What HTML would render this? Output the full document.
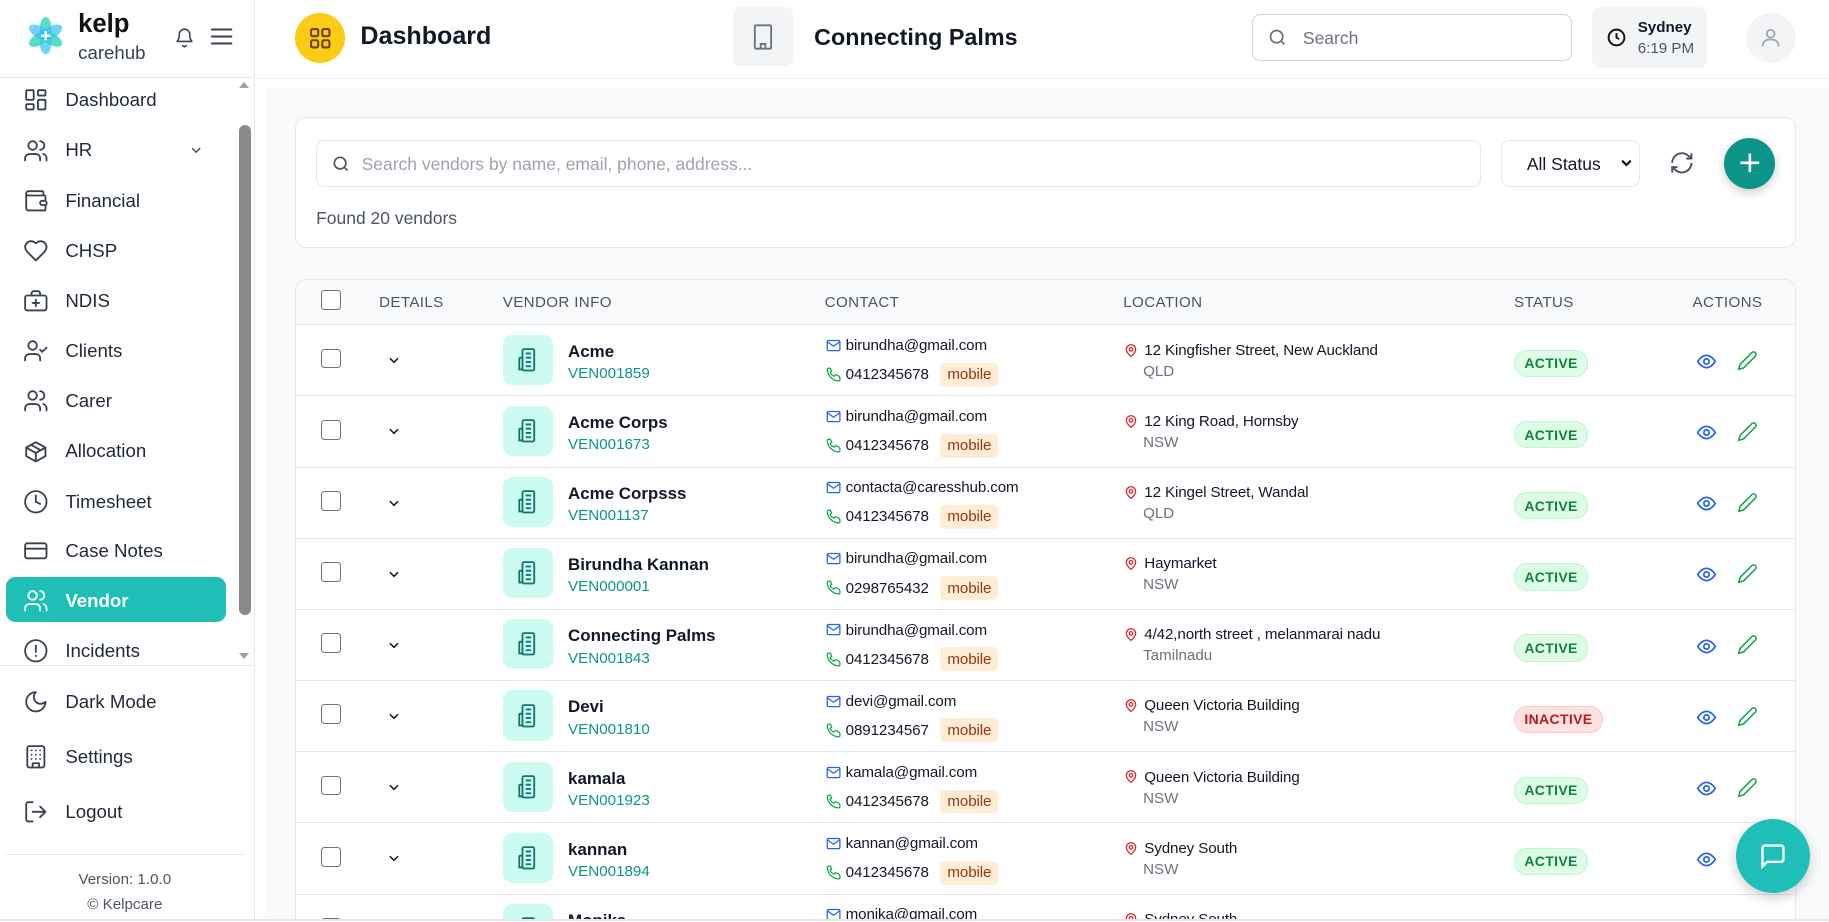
<!DOCTYPE html>
<html><head><meta charset="utf-8"><style>
*{box-sizing:border-box;margin:0;padding:0}
html,body{width:1829px;height:922px;overflow:hidden;background:#fff}
#w{zoom:1.16645;width:1568px;height:790px;position:relative;font-family:"Liberation Sans",sans-serif;color:#111827;overflow:hidden}
.abs{position:absolute}
svg{display:block}
.side{left:0;top:0;width:219px;height:790px;border-right:1px solid #e5e7eb;background:#fff}
.nav{position:absolute;left:20px;font-size:16px;color:#1f2937;display:flex;align-items:center;gap:14px;height:24px}
.nav svg{width:22px;height:22px;stroke:#374151;fill:none;stroke-width:1.7;stroke-linecap:round;stroke-linejoin:round}
.main{left:227px;top:75px;width:1341px;height:715px;background:#f9fafb}
.card{background:#fff;border:1px solid #e5e7eb;border-radius:10px}
.th{position:absolute;top:252px;font-size:13px;color:#4b5563;letter-spacing:.3px}
.cb{position:absolute;width:17px;height:17px;border:1.5px solid #6b7280;border-radius:3px;background:#fff}
.row{position:absolute;left:254px;width:1285px;height:61px;border-top:1px solid #e5e7eb}
.ib{position:absolute;left:177px;top:8px;width:43px;height:43px;background:#ccfbf1;border-radius:8px;display:flex;align-items:center;justify-content:center}
.nm{position:absolute;left:233px;top:14px;font-size:14.5px;font-weight:bold;color:#111827}
.id{position:absolute;left:233px;top:34px;font-size:13px;color:#0d9488}
.em{position:absolute;left:454px;top:10px;font-size:13px;display:flex;align-items:center;gap:4px;letter-spacing:-.1px}
.ph{position:absolute;left:454px;top:32px;font-size:13px;display:flex;align-items:center;gap:4px;letter-spacing:-.1px}
.mob{background:#ffedd5;color:#9a3412;border-radius:4px;padding:3px 6px;font-size:13px;margin-left:6px}
.l1{position:absolute;left:710px;top:14px;font-size:13px;display:flex;align-items:center;gap:5px;letter-spacing:-.1px}
.l2{position:absolute;left:726px;top:32px;font-size:13px;color:#6b7280}
.st{position:absolute;left:1044px;top:21px;font-size:12px;font-weight:bold;border-radius:11px;padding:4px 8px;letter-spacing:.3px}
.ac{background:#dcfce7;border:1px solid #bbf7d0;color:#15803d}
.in{background:#fee2e2;border:1px solid #fecaca;color:#b91c1c}
.eye{position:absolute;left:1200px;top:22px}
.pen{position:absolute;left:1235px;top:21px}
.chev{position:absolute;left:78px;top:24px}
</style></head><body><div id="w">

<div class="abs side">
 <svg class="abs" style="left:23px;top:15px" width="32" height="32" viewBox="0 0 32 32">
  <g transform="translate(16 16)">
   <ellipse rx="5" ry="10" cy="-6" fill="#2dd4bf" opacity=".8"/>
   <ellipse rx="5" ry="10" cy="-6" fill="#38bdf8" opacity=".7" transform="rotate(60)"/>
   <ellipse rx="5" ry="10" cy="-6" fill="#2dd4bf" opacity=".8" transform="rotate(120)"/>
   <ellipse rx="5" ry="10" cy="-6" fill="#38bdf8" opacity=".7" transform="rotate(180)"/>
   <ellipse rx="5" ry="10" cy="-6" fill="#2dd4bf" opacity=".8" transform="rotate(240)"/>
   <ellipse rx="5" ry="10" cy="-6" fill="#38bdf8" opacity=".7" transform="rotate(300)"/>
   <path d="M0-4V4M-4 0H4" stroke="#fff" stroke-width="2"/>
  </g></svg>
 <div class="abs" style="left:67px;top:9px;font-size:22px;font-weight:bold;color:#111">kelp</div>
 <div class="abs" style="left:67px;top:36px;font-size:16px;color:#374151">carehub</div>
 <svg class="abs" style="left:149px;top:22px" width="18" height="19" viewBox="0 0 24 24" fill="none" stroke="#374151" stroke-width="1.8"><path d="M6 9a6 6 0 0112 0c0 7 3 8 3 8H3s3-1 3-8M10 21a2 2 0 004 0"/></svg>
 <svg class="abs" style="left:180px;top:22px" width="20" height="18" viewBox="0 0 20 18" stroke="#374151" stroke-width="1.8"><path d="M1 3h18M1 9h18M1 15h18"/></svg>
 <div class="abs" style="left:0;top:66px;width:219px;border-top:1px solid #e5e7eb"></div>

 <div class="nav" style="top:74px"><svg viewBox="0 0 24 24"><rect x="3" y="3" width="7" height="9" rx="1"/><rect x="14" y="3" width="7" height="5" rx="1"/><rect x="14" y="12" width="7" height="9" rx="1"/><rect x="3" y="16" width="7" height="5" rx="1"/></svg>Dashboard</div>
 <div class="nav" style="top:117px"><svg viewBox="0 0 24 24"><circle cx="9" cy="7" r="4"/><path d="M2 21v-2a4 4 0 014-4h6a4 4 0 014 4v2M16 3a4 4 0 010 8M22 21v-2a4 4 0 00-3-4"/></svg>HR</div>
 <svg class="abs" style="left:161px;top:122px" width="14" height="14" viewBox="0 0 24 24" fill="none" stroke="#374151" stroke-width="2"><path d="M6 9l6 6 6-6"/></svg>
 <div class="nav" style="top:160px"><svg viewBox="0 0 24 24"><path d="M19 7V4a1 1 0 00-1-1H5a2 2 0 000 4h15a1 1 0 011 1v4h-3a2 2 0 000 4h3a1 1 0 001-1v-2M3 5v14a2 2 0 002 2h15a1 1 0 001-1v-4"/></svg>Financial</div>
 <div class="nav" style="top:203px"><svg viewBox="0 0 24 24"><path d="M19 14c1.5-1.5 3-3.2 3-5.5A5.5 5.5 0 0016.5 3c-1.8 0-3 .5-4.5 2-1.5-1.5-2.7-2-4.5-2A5.5 5.5 0 002 8.5c0 2.3 1.5 4 3 5.5l7 7z"/></svg>CHSP</div>
 <div class="nav" style="top:246px"><svg viewBox="0 0 24 24"><rect x="2" y="7" width="20" height="14" rx="2"/><path d="M8 7V5a2 2 0 012-2h4a2 2 0 012 2v2M12 11v6M9 14h6"/></svg>NDIS</div>
 <div class="nav" style="top:289px"><svg viewBox="0 0 24 24"><circle cx="9" cy="7" r="4"/><path d="M2 21v-2a4 4 0 014-4h6a4 4 0 014 4v2M16 11l2 2 4-4"/></svg>Clients</div>
 <div class="nav" style="top:332px"><svg viewBox="0 0 24 24"><circle cx="9" cy="7" r="4"/><path d="M2 21v-2a4 4 0 014-4h6a4 4 0 014 4v2M16 3a4 4 0 010 8M22 21v-2a4 4 0 00-3-4"/></svg>Carer</div>
 <div class="nav" style="top:375px"><svg viewBox="0 0 24 24"><path d="M21 8l-9-5-9 5v8l9 5 9-5zM3 8l9 5 9-5M12 13v8M7.5 5.5l9 5"/></svg>Allocation</div>
 <div class="nav" style="top:418px"><svg viewBox="0 0 24 24"><circle cx="12" cy="12" r="10"/><path d="M12 6v6l4 2"/></svg>Timesheet</div>
 <div class="nav" style="top:460px"><svg viewBox="0 0 24 24"><rect x="2" y="5" width="20" height="14" rx="2"/><path d="M2 10h20"/></svg>Case Notes</div>
 <div class="abs" style="left:5px;top:495px;width:189px;height:38px;background:#1fbfb8;border-radius:8px"></div>
 <div class="nav" style="top:503px;color:#fff;font-weight:bold"><svg viewBox="0 0 24 24" style="stroke:#fff"><circle cx="9" cy="7" r="4"/><path d="M2 21v-2a4 4 0 014-4h6a4 4 0 014 4v2M16 3a4 4 0 010 8M22 21v-2a4 4 0 00-3-4"/></svg>Vendor</div>
 <div class="nav" style="top:546px"><svg viewBox="0 0 24 24"><circle cx="12" cy="12" r="10"/><path d="M12 7v6M12 16.5v.5"/></svg>Incidents</div>
 <div class="abs" style="left:205px;top:70px;width:0;height:0;border:5px solid transparent;border-bottom:6px solid #9ca3af;border-top:0"></div>
 <div class="abs" style="left:205px;top:107px;width:10px;height:420px;background:#8a8a8a;border-radius:5px"></div>
 <div class="abs" style="left:205px;top:560px;width:0;height:0;border:5px solid transparent;border-top:6px solid #9ca3af;border-bottom:0"></div>
 <div class="abs" style="left:0;top:570px;width:219px;border-top:1px solid #e5e7eb"></div>
 <div class="nav" style="top:590px"><svg viewBox="0 0 24 24"><path d="M12 3a6 6 0 009 9 9 9 0 11-9-9z"/></svg>Dark Mode</div>
 <div class="nav" style="top:637px"><svg viewBox="0 0 24 24"><rect x="4" y="2" width="16" height="20" rx="2"/><path d="M9 22v-4h6v4M8 6h.01M12 6h.01M16 6h.01M8 10h.01M12 10h.01M16 10h.01M8 14h.01M12 14h.01M16 14h.01"/></svg>Settings</div>
 <div class="nav" style="top:684px"><svg viewBox="0 0 24 24"><path d="M9 21H5a2 2 0 01-2-2V5a2 2 0 012-2h4M16 17l5-5-5-5M21 12H9"/></svg>Logout</div>
 <div class="abs" style="left:5px;top:732px;width:205px;border-top:1px solid #e5e7eb"></div>
 <div class="abs" style="left:0;top:743px;width:214px;text-align:center;font-size:13px;color:#4b5563;line-height:22px">Version: 1.0.0<br>© Kelpcare</div>
</div>

<div class="abs" style="left:220px;top:67px;width:1348px;border-top:1px solid #f0f0f0"></div>
<div class="abs" style="left:253px;top:11px;width:43px;height:43px;border-radius:50%;background:#facc15"></div>
<svg class="abs" style="left:264px;top:22px" width="21" height="21" viewBox="0 0 24 24" fill="none" stroke="#713f12" stroke-width="2"><rect x="3" y="3" width="7" height="7" rx="1.5"/><rect x="14" y="3" width="7" height="7" rx="1.5"/><rect x="14" y="14" width="7" height="7" rx="1.5"/><rect x="3" y="14" width="7" height="7" rx="1.5"/></svg>
<div class="abs" style="left:309px;top:19px;font-size:21.5px;font-weight:bold">Dashboard</div>
<div class="abs" style="left:628px;top:6px;width:52px;height:51px;background:#f3f4f6;border-radius:6px"></div>
<svg class="abs" style="left:642px;top:20px" width="24" height="24" viewBox="0 0 24 24" fill="none" stroke="#6b7280" stroke-width="1.6"><rect x="5" y="2" width="14" height="20" rx="1"/><path d="M10 22v-4h4v4M9 6h.01M12 6h.01M15 6h.01M9 10h.01M12 10h.01M15 10h.01M9 14h.01M12 14h.01M15 14h.01"/></svg>
<div class="abs" style="left:698px;top:21px;font-size:20px;font-weight:bold">Connecting Palms</div>
<div class="abs" style="left:1073px;top:12px;width:275px;height:40px;border:1px solid #d1d5db;border-radius:7px"></div>
<svg class="abs" style="left:1086px;top:23px" width="18" height="18" viewBox="0 0 24 24" fill="none" stroke="#6b7280" stroke-width="2"><circle cx="11" cy="11" r="7"/><path d="M20 20l-4-4"/></svg>
<div class="abs" style="left:1117px;top:24px;font-size:15px;color:#6b7280">Search</div>
<div class="abs" style="left:1365px;top:6px;width:98px;height:52px;background:#f3f4f6;border-radius:7px"></div>
<svg class="abs" style="left:1377px;top:23px" width="18" height="18" viewBox="0 0 24 24" fill="none" stroke="#111" stroke-width="2.2"><circle cx="12" cy="12" r="9"/><path d="M12 7v5l3 2"/></svg>
<div class="abs" style="left:1404px;top:16px;font-size:13px;font-weight:bold">Sydney</div>
<div class="abs" style="left:1404px;top:34px;font-size:13px;color:#4b5563">6:19 PM</div>
<div class="abs" style="left:1497px;top:11px;width:43px;height:43px;border-radius:50%;background:#f3f4f6"></div>
<svg class="abs" style="left:1508px;top:22px" width="20" height="20" viewBox="0 0 24 24" fill="none" stroke="#9ca3af" stroke-width="1.8"><circle cx="12" cy="8" r="4"/><path d="M4 21v-1a6 6 0 016-6h4a6 6 0 016 6v1"/></svg>

<div class="abs main"></div>
<div class="abs card" style="left:253px;top:100px;width:1287px;height:113px"></div>
<div class="abs" style="left:271px;top:120px;width:999px;height:40px;border:1px solid #e5e7eb;border-radius:7px"></div>
<svg class="abs" style="left:284px;top:132px" width="17" height="17" viewBox="0 0 24 24" fill="none" stroke="#4b5563" stroke-width="2"><circle cx="11" cy="11" r="7"/><path d="M20 20l-4-4"/></svg>
<div class="abs" style="left:310px;top:132px;font-size:15px;color:#9ca3af">Search vendors by name, email, phone, address...</div>
<div class="abs" style="left:1287px;top:120px;width:119px;height:40px;border:1px solid #e5e7eb;border-radius:7px;background:#fff"></div>
<div class="abs" style="left:1309px;top:132px;font-size:15px">All Status</div>
<svg class="abs" style="left:1389px;top:135px" width="11" height="10" viewBox="0 0 12 10" fill="none" stroke="#111" stroke-width="2"><path d="M2 3l4 4 4-4"/></svg>
<svg class="abs" style="left:1431px;top:129px" width="22" height="22" viewBox="0 0 24 24" fill="none" stroke="#4b5563" stroke-width="1.8"><path d="M3 12a9 9 0 0115-6.7L21 8M21 3v5h-5M21 12a9 9 0 01-15 6.7L3 16M3 21v-5h5"/></svg>
<div class="abs" style="left:1478px;top:118px;width:44px;height:44px;border-radius:50%;background:#0d9488;box-shadow:0 3px 8px rgba(0,0,0,.2)"></div>
<svg class="abs" style="left:1489px;top:129px" width="22" height="22" viewBox="0 0 22 22" stroke="#fff" stroke-width="2.2"><path d="M11 3v16M3 11h16"/></svg>
<div class="abs" style="left:271px;top:178px;font-size:15px;color:#4b5563">Found 20 vendors</div>

<div class="abs card" style="left:253px;top:239px;width:1287px;height:580px;overflow:hidden"><div style="height:39px;background:#f9fafb"></div></div>
<div class="cb" style="left:275px;top:249px"></div>
<div class="th" style="left:325px">DETAILS</div>
<div class="th" style="left:431px">VENDOR INFO</div>
<div class="th" style="left:707px">CONTACT</div>
<div class="th" style="left:963px">LOCATION</div>
<div class="th" style="left:1298px">STATUS</div>
<div class="th" style="left:1451px">ACTIONS</div>

<div id="rows"></div>
<script>
const d=[["Acme","VEN001859","birundha@gmail.com","0412345678","12 Kingfisher Street, New Auckland","QLD",1],
["Acme Corps","VEN001673","birundha@gmail.com","0412345678","12 King Road, Hornsby","NSW",1],
["Acme Corpsss","VEN001137","contacta@caresshub.com","0412345678","12 Kingel Street, Wandal","QLD",1],
["Birundha Kannan","VEN000001","birundha@gmail.com","0298765432","Haymarket","NSW",1],
["Connecting Palms","VEN001843","birundha@gmail.com","0412345678","4/42,north street , melanmarai nadu","Tamilnadu",1],
["Devi","VEN001810","devi@gmail.com","0891234567","Queen Victoria Building","NSW",0],
["kamala","VEN001923","kamala@gmail.com","0412345678","Queen Victoria Building","NSW",1],
["kannan","VEN001894","kannan@gmail.com","0412345678","Sydney South","NSW",1],
["Monika","VEN001900","monika@gmail.com","0412345678","Sydney South","NSW",1]];
let h="";
d.forEach((r,i)=>{const t=278+i*61;h+=`<div class="row" style="top:${t}px">
<div class="cb" style="left:21px;top:20px"></div>
<svg class="chev" width="12" height="12" viewBox="0 0 24 24" fill="none" stroke="#111" stroke-width="2.5"><path d="M5 9l7 7 7-7"/></svg>
<div class="ib"><svg width="22" height="22" viewBox="0 0 24 24" fill="none" stroke="#0f766e" stroke-width="1.7"><rect x="7" y="2" width="11" height="20" rx="1.5"/><path d="M7 10H5a1 1 0 00-1 1v10h3M10 6h5M10 10h5M10 14h5M10 18h5"/></svg></div>
<div class="nm">${r[0]}</div><div class="id">${r[1]}</div>
<div class="em"><svg width="13" height="13" viewBox="0 0 24 24" fill="none" stroke="#2563eb" stroke-width="2"><rect x="2" y="4" width="20" height="16" rx="2"/><path d="M2 6l10 7 10-7"/></svg>${r[2]}</div>
<div class="ph"><svg width="13" height="13" viewBox="0 0 24 24" fill="none" stroke="#16a34a" stroke-width="2"><path d="M22 17v3a2 2 0 01-2 2A19 19 0 012 4a2 2 0 012-2h3l2 5-2.5 1.5a11 11 0 006 6L15 12l5 2z"/></svg>${r[3]}<span class="mob">mobile</span></div>
<div class="l1"><svg width="12" height="13" viewBox="0 0 24 24" fill="none" stroke="#dc2626" stroke-width="2.2"><path d="M20 10c0 6-8 12-8 12S4 16 4 10a8 8 0 0116 0z"/><circle cx="12" cy="10" r="3"/></svg>${r[4]}</div>
<div class="l2">${r[5]}</div>
<div class="st ${r[6]?'ac':'in'}">${r[6]?'ACTIVE':'INACTIVE'}</div>
<svg class="eye" width="18" height="18" viewBox="0 0 24 24" fill="none" stroke="#2563eb" stroke-width="2"><path d="M2 12s4-7 10-7 10 7 10 7-4 7-10 7S2 12 2 12z"/><circle cx="12" cy="12" r="3"/></svg>
<svg class="pen" width="18" height="18" viewBox="0 0 24 24" fill="none" stroke="#16a34a" stroke-width="1.8"><path d="M17 3a2.8 2.8 0 014 4L7.5 20.5 2 22l1.5-5.5z"/></svg>
</div>`});
document.getElementById("rows").innerHTML=h;
</script>
<div class="abs" style="left:0;top:788px;width:1568px;height:2px;background:#e5e7eb"></div>
<div class="abs" style="left:1488px;top:702px;width:64px;height:64px;border-radius:50%;background:#1fbfb8;box-shadow:0 4px 10px rgba(0,0,0,.2)"></div>
<svg class="abs" style="left:1508px;top:722px" width="24" height="24" viewBox="0 0 24 24" fill="none" stroke="#fff" stroke-width="2"><path d="M21 15a2 2 0 01-2 2H7l-4 4V5a2 2 0 012-2h14a2 2 0 012 2z"/></svg>
</div></body></html>
